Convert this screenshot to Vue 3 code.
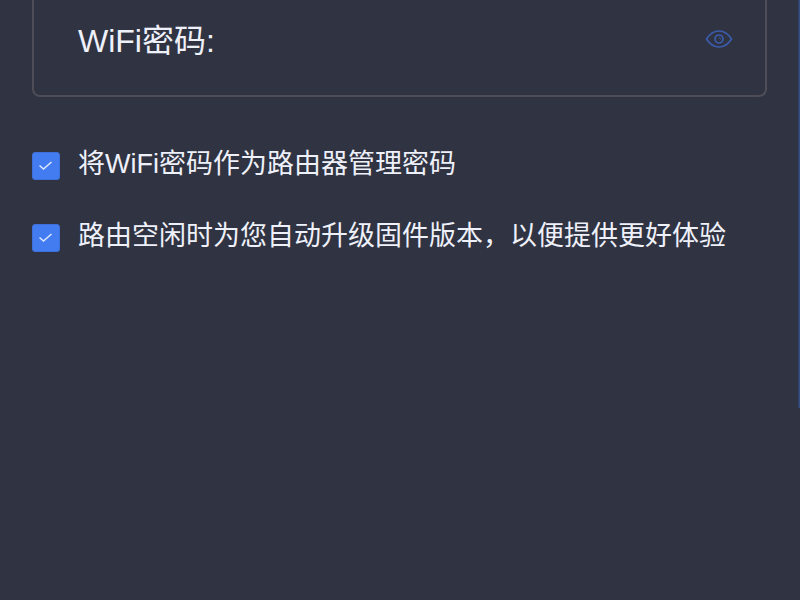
<template>
  <main class="wifi-setup">
    <div class="password-field">
      <label for="wifi-password">WiFi密码:</label>
      <input id="wifi-password" v-model="password" :type="showPassword ? 'text' : 'password'">
      <button type="button" aria-label="显示密码" @click="showPassword = !showPassword">
        <svg viewBox="0 0 28 20" width="28" height="20" fill="none" stroke="currentColor">
          <path d="M1.500 10C4.800 4.800 9 2 14 2s9.200 2.800 12.500 8C23.200 15.200 19 18 14 18S4.800 15.200 1.500 10z" stroke-width="1.700" />
          <circle cx="14" cy="10" r="4" stroke-width="1.700" />
          <path d="M14 8.500a1.800 1.800 0 0 1 1.500 1.800" stroke-width="1" />
        </svg>
      </button>
    </div>

    <div class="options">
      <label v-for="option in options" :key="option.id" class="option">
        <span class="checkbox">
          <input type="checkbox" v-model="option.checked">
          <svg viewBox="0 0 28 28" fill="none" stroke="currentColor">
            <path d="M7.500 13.500l4 3.500 8-7" stroke-width="1.500" />
          </svg>
        </span>
        <span class="option-text">{{ option.text }}</span>
      </label>
    </div>
  </main>
</template>

<script setup>
import { ref } from 'vue'

const password = ref('')
const showPassword = ref(false)

const options = ref([
  { id: 'admin', text: '将WiFi密码作为路由器管理密码', checked: true },
  { id: 'upgrade', text: '路由空闲时为您自动升级固件版本，以便提供更好体验', checked: true }
])
</script>

<style>
body {
  margin: 0;
  background-color: #303341;
}
</style>

<style scoped>
.wifi-setup {
  position: relative;
  box-sizing: border-box;
  min-height: 100vh;
  padding: 0 33px 0 32px;
  background-color: #303341;
  color: #eef0fa;
  font-family: "Liberation Sans", "Noto Sans CJK SC", sans-serif;
}

/* edge of the next panel */
.wifi-setup::after {
  content: "";
  position: absolute;
  top: 0;
  right: 0;
  width: 2px;
  height: 68%;
  background: linear-gradient(to right, #2c3a5e, #3a5390);
}

.password-field {
  display: flex;
  align-items: center;
  padding: 16px 32px 29px 44px;
  border: 2px solid #4f4e58;
  border-top: none;
  border-radius: 0 0 8px 8px;
}

.password-field label {
  font-size: 32px;
  line-height: 50px;
}

.password-field input {
  flex: 1;
  min-width: 0;
  margin: 0 16px;
  padding: 0;
  border: none;
  outline: none;
  background: transparent;
  color: inherit;
  font: inherit;
  font-size: 32px;
}

.password-field button {
  display: flex;
  margin: 0;
  padding: 0 0 4px;
  border: none;
  background: transparent;
  color: #3b5cab;
  cursor: pointer;
}

.options {
  display: flex;
  flex-direction: column;
  gap: 32px;
  padding-top: 47px;
}

.option {
  display: flex;
  align-items: flex-start;
  gap: 18px;
  cursor: pointer;
}

.checkbox {
  display: grid;
  flex: none;
  width: 28px;
  height: 28px;
  margin-top: 8px;
}

.checkbox input,
.checkbox svg {
  grid-area: 1 / 1;
  width: 28px;
  height: 28px;
}

.checkbox input {
  margin: 0;
  appearance: none;
  border: 1px solid #3d70dc;
  border-radius: 3px;
  background: transparent;
  cursor: pointer;
}

.checkbox input:checked {
  background-color: #437bf0;
}

.checkbox svg {
  color: #dce8ff;
  pointer-events: none;
}

.checkbox input:not(:checked) + svg {
  visibility: hidden;
}

.option-text {
  font-size: 27px;
  line-height: 40px;
}
</style>
